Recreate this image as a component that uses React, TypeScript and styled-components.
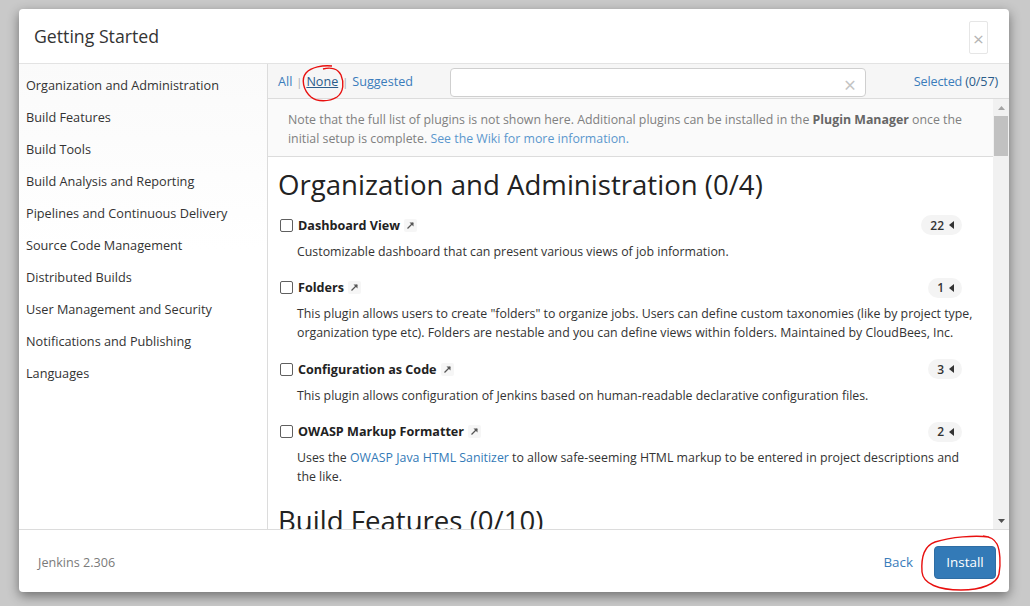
import styled, { createGlobalStyle } from 'styled-components';

interface PluginData {
  name: string;
  count: number;
  desc: React.ReactNode;
}

const categories = [
  'Organization and Administration',
  'Build Features',
  'Build Tools',
  'Build Analysis and Reporting',
  'Pipelines and Continuous Delivery',
  'Source Code Management',
  'Distributed Builds',
  'User Management and Security',
  'Notifications and Publishing',
  'Languages',
];

const plugins: PluginData[] = [
  {
    name: 'Dashboard View',
    count: 22,
    desc: 'Customizable dashboard that can present various views of job information.',
  },
  {
    name: 'Folders',
    count: 1,
    desc: 'This plugin allows users to create "folders" to organize jobs. Users can define custom taxonomies (like by project type, organization type etc). Folders are nestable and you can define views within folders. Maintained by CloudBees, Inc.',
  },
  {
    name: 'Configuration as Code',
    count: 3,
    desc: 'This plugin allows configuration of Jenkins based on human-readable declarative configuration files.',
  },
  {
    name: 'OWASP Markup Formatter',
    count: 2,
    desc: (
      <>
        Uses the <a>OWASP Java HTML Sanitizer</a> to allow safe-seeming HTML markup to be entered in project
        descriptions and the like.
      </>
    ),
  },
];

function App() {
  return (
    <>
      <GlobalStyle />
      <Page>
        <Modal>
          <Header>
            <Title>Getting Started</Title>
            <CloseButton>×</CloseButton>
          </Header>
          <Body>
            <Sidebar>
              {categories.map((c) => (
                <SideItem key={c}>{c}</SideItem>
              ))}
            </Sidebar>
            <Main>
              <Toolbar>
                <Filters>
                  <LinkText>All</LinkText>
                  <Sep>|</Sep>
                  <LinkText $underline>None</LinkText>
                  <Sep>|</Sep>
                  <LinkText>Suggested</LinkText>
                </Filters>
                <SearchBox>
                  <ClearIcon>×</ClearIcon>
                </SearchBox>
                <Selected>
                  Selected <Count>(0/57)</Count>
                </Selected>
              </Toolbar>
              <ScrollArea>
                <Content>
                  <Note>
                    Note that the full list of plugins is not shown here. Additional plugins can be installed in the{' '}
                    <b>Plugin Manager</b> once the initial setup is complete. <NoteLink>See the Wiki for more information.</NoteLink>
                  </Note>
                  <Section>
                    <SectionTitle>Organization and Administration (0/4)</SectionTitle>
                    {plugins.map((p) => (
                      <Plugin key={p.name}>
                        <PluginHead>
                          <Check />
                          <PluginName>{p.name}</PluginName>
                          <ExtLink>
                            <svg width="9" height="9" viewBox="0 0 9 9">
                              <path d="M1.5 7.5 L7 2" stroke="#555" strokeWidth="1.3" fill="none" />
                              <path d="M3.5 1.5 H7.5 V5.5 Z" fill="#555" />
                            </svg>
                          </ExtLink>
                          <Badge>
                            {p.count}
                            <svg width="5" height="8" viewBox="0 0 5 8">
                              <path d="M5 0 L0 4 L5 8 Z" fill="#333" />
                            </svg>
                          </Badge>
                        </PluginHead>
                        <PluginDesc>{p.desc}</PluginDesc>
                      </Plugin>
                    ))}
                    <SectionTitle>Build Features (0/10)</SectionTitle>
                  </Section>
                </Content>
                <Scrollbar>
                  <ScrollArrow>
                    <svg width="7" height="4" viewBox="0 0 7 4">
                      <path d="M0 4 L3.5 0 L7 4 Z" fill="#a3a3a3" />
                    </svg>
                  </ScrollArrow>
                  <Track>
                    <Thumb />
                  </Track>
                  <ScrollArrow>
                    <svg width="7" height="4" viewBox="0 0 7 4">
                      <path d="M0 0 L3.5 4 L7 0 Z" fill="#505050" />
                    </svg>
                  </ScrollArrow>
                </Scrollbar>
              </ScrollArea>
            </Main>
          </Body>
          <Footer>
            <Version>Jenkins 2.306</Version>
            <FooterActions>
              <BackLink>Back</BackLink>
              <InstallButton>Install</InstallButton>
            </FooterActions>
          </Footer>
        </Modal>
        <Scribble viewBox="0 0 50 40" $x={299} $y={64} $w={50} $h={40}>
          <path
            d="M33 2 C24 1 12 3 7 9 C2 15 4 26 12 33 C18 38 30 38 38 33 C45 28 45 18 42 11 C39 5 32 3 24 5"
            stroke="#e8100f"
            strokeWidth="1.4"
            fill="none"
          />
        </Scribble>
        <Scribble viewBox="0 0 86 58" $x={917} $y={534} $w={86} $h={58}>
          <path
            d="M72 3 C58 1 34 3 18 8 C7 12 4 24 5 38 C6 50 22 56 44 56 C64 56 80 50 82 40 C84 30 83 16 80 10 C77 5 74 3 66 2"
            stroke="#e8100f"
            strokeWidth="1.4"
            fill="none"
          />
        </Scribble>
      </Page>
    </>
  );
}

export default App;

const GlobalStyle = createGlobalStyle`
  html, body {
    margin: 0;
    padding: 0;
  }
  body {
    font-family: "Open Sans", "Noto Sans", sans-serif;
    color: #333;
    background: #c9c9c9;
  }
  * {
    box-sizing: border-box;
  }
`;

const Page = styled.div`
  position: relative;
  width: 1030px;
  height: 606px;
  padding: 9px 0 0 19px;
  background: #c9c9c9;
  overflow: hidden;
`;

const Modal = styled.div`
  width: 990px;
  height: 583px;
  background: #fff;
  border-radius: 4px;
  box-shadow: 0 4px 12px rgba(0, 0, 0, 0.45);
  display: flex;
  flex-direction: column;
  overflow: hidden;
`;

const Header = styled.div`
  height: 55px;
  flex-shrink: 0;
  display: flex;
  align-items: center;
  justify-content: space-between;
  padding: 0 21px 0 15px;
  border-bottom: 1px solid #e3e3e3;
`;

const Title = styled.h4`
  margin: 0;
  font-size: 17.7px;
  font-weight: 500;
  color: #333;
`;

const CloseButton = styled.div`
  width: 19px;
  height: 33px;
  margin-top: 3px;
  border: 1px solid #e6e6e6;
  border-radius: 2px;
  display: flex;
  align-items: center;
  justify-content: center;
  padding-top: 4px;
  font-size: 19px;
  color: #b5b5b5;
  line-height: 1;
`;

const Body = styled.div`
  flex: 1;
  display: flex;
  min-height: 0;
`;

const Sidebar = styled.ul`
  width: 249px;
  flex-shrink: 0;
  margin: 0;
  padding: 5px 0 0 7px;
  list-style: none;
  border-right: 1px solid #dcdcdc;
  background: linear-gradient(#fafafa, #fff 40%);
`;

const SideItem = styled.li`
  height: 32px;
  display: flex;
  align-items: center;
  font-size: 12.7px;
  color: #333;
`;

const Main = styled.div`
  flex: 1;
  display: flex;
  flex-direction: column;
  min-width: 0;
`;

const Toolbar = styled.div`
  height: 35px;
  flex-shrink: 0;
  display: flex;
  align-items: center;
  padding: 0 11px 0 10px;
  background: #f6f6f6;
  border-bottom: 1px solid #dcdcdc;
  font-size: 12.6px;
`;

const Filters = styled.div`
  display: flex;
  align-items: center;
  width: 172px;
  padding-top: 1px;
`;

const LinkText = styled.a<{ $underline?: boolean }>`
  color: #3a7cbb;
  text-decoration: ${(p) => (p.$underline ? 'underline' : 'none')};
  ${(p) => p.$underline && 'color: #2a5c8a;'}
`;

const Sep = styled.span`
  color: #aaa;
  margin: 0 4px;
  font-size: 11px;
`;

const SearchBox = styled.div`
  width: 416px;
  height: 29px;
  margin-top: 2px;
  background: #fff;
  border: 1px solid #cfcfcf;
  border-radius: 4px;
  display: flex;
  align-items: center;
  justify-content: flex-end;
  padding: 6px 9px 0 0;
`;

const ClearIcon = styled.span`
  font-size: 21px;
  line-height: 1;
  color: #c3c3c3;
`;

const Selected = styled.div`
  margin-left: auto;
  color: #3a7cbb;
  letter-spacing: -0.15px;
`;

const Count = styled.span`
  color: #2a5c8a;
`;

const ScrollArea = styled.div`
  flex: 1;
  display: flex;
  min-height: 0;
`;

const Content = styled.div`
  flex: 1;
  overflow: hidden;
`;

const Note = styled.div`
  padding: 11px 14px 8px 20px;
  background: #fafafa;
  border-bottom: 1px solid #dcdcdc;
  font-size: 12.35px;
  line-height: 19px;
  color: #808080;

  b {
    color: #666;
    font-weight: 700;
  }
`;

const NoteLink = styled.a`
  color: #5b97cd;
`;

const Section = styled.div`
  padding: 12px 20px 0 10px;
`;

const SectionTitle = styled.h2`
  margin: 0 0 15px;
  font-size: 27.6px;
  font-weight: 500;
  line-height: 31px;
  color: #222;
`;

const Plugin = styled.div`
  margin-bottom: 17px;
  &:last-of-type {
    margin-bottom: 19px;
  }
`;

const PluginHead = styled.div`
  height: 20px;
  display: flex;
  align-items: center;
  padding-right: 11px;
`;

const Check = styled.span`
  width: 13px;
  height: 13px;
  margin: 0 5px 0 2px;
  border: 1px solid #5f5f5f;
  border-radius: 2px;
  background: #fff;
`;

const PluginName = styled.span`
  font-size: 12.6px;
  font-weight: 700;
  color: #222;
`;

const ExtLink = styled.span`
  width: 13px;
  height: 13px;
  margin-left: 4px;
  display: flex;
  align-items: center;
  justify-content: center;
  background: #f6f6f6;
  border-radius: 2px;
`;

const Badge = styled.span`
  margin-left: auto;
  height: 20px;
  display: flex;
  align-items: center;
  gap: 5px;
  padding: 0 8px 0 9px;
  border-radius: 10px;
  background: #f4f4f4;
  font-size: 12px;
  font-weight: 600;
  color: #333;
`;

const PluginDesc = styled.div`
  margin-top: 6.5px;
  padding-left: 19px;
  font-size: 12.35px;
  line-height: 19px;
  color: #333;

  a {
    color: #337ab7;
  }
`;

const Scrollbar = styled.div`
  width: 16px;
  flex-shrink: 0;
  background: #f1f1f1;
  display: flex;
  flex-direction: column;
`;

const ScrollArrow = styled.div`
  height: 17px;
  display: flex;
  align-items: center;
  justify-content: center;
`;

const Track = styled.div`
  flex: 1;
  padding: 0 1px;
`;

const Thumb = styled.div`
  height: 40px;
  background: #c1c1c1;
`;

const Footer = styled.div`
  height: 63px;
  flex-shrink: 0;
  display: flex;
  align-items: center;
  justify-content: space-between;
  padding: 2px 13px 0 19px;
  border-top: 1px solid #dcdcdc;
`;

const Version = styled.span`
  font-size: 12.6px;
  color: #7a7a7a;
`;

const FooterActions = styled.div`
  display: flex;
  align-items: center;
  gap: 21px;
`;

const BackLink = styled.a`
  font-size: 13.4px;
  color: #3a7cbb;
`;

const InstallButton = styled.button`
  width: 62px;
  height: 33px;
  border: 1px solid #2e6da4;
  border-radius: 4px;
  background: #337ab7;
  color: #fff;
  font-family: inherit;
  font-size: 13.4px;
  padding: 0;
`;

const Scribble = styled.svg<{ $x: number; $y: number; $w: number; $h: number }>`
  position: absolute;
  left: ${(p) => p.$x}px;
  top: ${(p) => p.$y}px;
  width: ${(p) => p.$w}px;
  height: ${(p) => p.$h}px;
  pointer-events: none;
`;
